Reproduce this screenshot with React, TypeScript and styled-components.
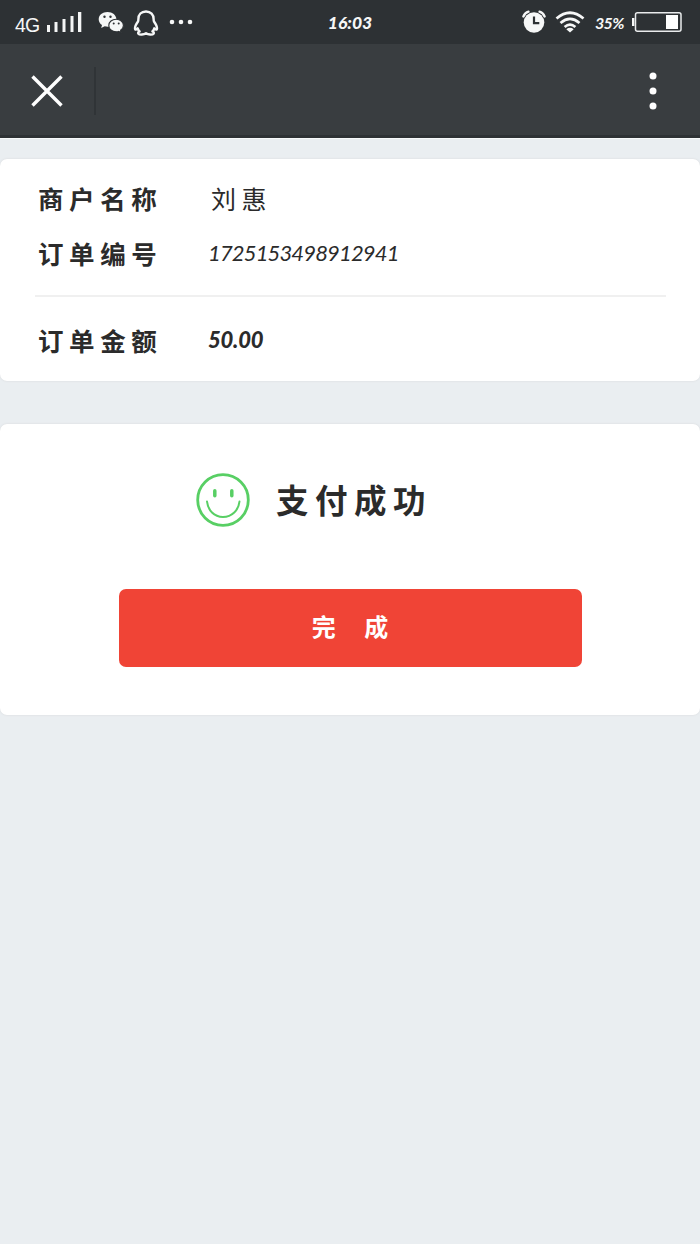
import React from "react";
import styled, { createGlobalStyle } from "styled-components";

const GlobalStyle = createGlobalStyle`
  * { box-sizing: border-box; }
  body {
    margin: 0;
    background: #eaeef1;
    color: #2b2b2b;
    font-family: Lato, "Noto Sans CJK SC", sans-serif;
  }
`;

const Screen = styled.div`
  width: 700px;
  min-height: 1244px;
  background: #eaeef1;
`;

const StatusBar = styled.header`
  display: grid;
  grid-template-columns: 1fr auto 1fr;
  align-items: center;
  height: 44px;
  padding: 0 18px 0 15px;
  background: #2d3134;
  color: #f6f7f7;
`;

const StatusGroup = styled.div<{ $end?: boolean }>`
  display: flex;
  align-items: center;
  justify-content: ${(p) => (p.$end ? "flex-end" : "flex-start")};
  height: 44px;
`;

const Network = styled.span`
  width: 31px;
  padding-top: 5px;
  font: 19.5px/22px "Liberation Sans", sans-serif;
  letter-spacing: -0.8px;
`;

const Clock = styled.time`
  padding: 2px 0 0 3px;
  font-size: 17.5px;
  font-weight: 900;
  font-style: italic;
  line-height: 22px;
`;

const BatteryText = styled.span`
  width: 37px;
  margin-left: 10px;
  font-size: 16px;
  font-weight: 700;
  font-style: italic;
  letter-spacing: -0.7px;
  white-space: nowrap;
`;

const NavBar = styled.nav`
  display: flex;
  align-items: center;
  height: 95px;
  padding: 0 38px 0 31px;
  background: #393d40;
  border-bottom: 1px solid #f8fafb;
  box-shadow: inset 0 -3px 0 #2e3235;
`;

const NavButton = styled.button`
  display: flex;
  padding: 0;
  border: 0;
  background: none;
  color: #fff;
`;

const NavDivider = styled.span`
  width: 2px;
  height: 48px;
  margin: 0 auto 0 31px;
  background: #303437;
`;

const Content = styled.main`
  display: flex;
  flex-direction: column;
  gap: 43px;
  padding-top: 20px;
`;

const Card = styled.section`
  background: #fff;
  border-radius: 7px;
  box-shadow: 0 0 2px #d3d5d7;
`;

const OrderCard = styled(Card)`
  height: 222px;
  padding: 11px 34px 0 35px;
`;

const OrderRow = styled.div`
  display: flex;
  align-items: center;
  height: 55px;
`;

const Label = styled.span`
  width: 173px;
  padding-left: 3px;
  font-family: "Noto Sans CJK SC", sans-serif;
  font-size: 25.5px;
  font-weight: 700;
  letter-spacing: 5.6px;
  line-height: 40px;
`;

const Name = styled.span`
  padding-left: 3px;
  font-family: "Noto Sans CJK SC", sans-serif;
  font-size: 25px;
  font-weight: 400;
  letter-spacing: 5.5px;
  line-height: 40px;
`;

const OrderNumber = styled.span`
  font-size: 22px;
  font-style: italic;
  letter-spacing: -0.85px;
`;

const Amount = styled.span`
  font-size: 22px;
  font-weight: 900;
  font-style: italic;
  letter-spacing: -0.2px;
`;

const Divider = styled.hr`
  height: 2px;
  margin: 15px 0;
  border: 0;
  background: #f0f0f0;
`;

const ResultCard = styled(Card)`
  display: flex;
  flex-direction: column;
  align-items: center;
  height: 291px;
  padding-top: 46px;
`;

const Result = styled.div`
  display: flex;
  align-items: center;
  align-self: flex-start;
  height: 60px;
  margin-left: 195px;
`;

const ResultTitle = styled.h1`
  margin: 0 0 3px 25px;
  font-family: "Noto Sans CJK SC", sans-serif;
  font-size: 32.5px;
  font-weight: 700;
  letter-spacing: 6.5px;
  line-height: 50px;
`;

const DoneButton = styled.button`
  width: 463px;
  height: 78px;
  margin-top: 59px;
  padding: 0 0 4px;
  border: 0;
  border-radius: 7px;
  background: #f04436;
  color: #fff;
  font: 700 24px/36px "Noto Sans CJK SC", sans-serif;
  white-space: pre;
  word-spacing: 23px;
`;

const SignalIcon = () => (
  <svg width="37" height="24" viewBox="0 0 37 24" fill="#f4f5f5">
    <rect x="1" y="15" width="3" height="7" />
    <rect x="8.5" y="12" width="3" height="10" />
    <rect x="16.5" y="9" width="3" height="13" />
    <rect x="24.5" y="6" width="3" height="16" />
    <rect x="32" y="2" width="3.3" height="20" />
  </svg>
);

const ChatIcon = () => (
  <svg width="26" height="23" viewBox="0 0 26 23" style={{ marginLeft: 15 }}>
    <path d="M9.5 1C4.5 1 .7 4.1.7 8.2c0 2.4 1.2 4.4 3.3 5.8l-.8 3.1 3.5-1.8c1 .3 2 .4 3.2.4 4.8 0 8.5-3.2 8.5-7.4S14.5 1 9.5 1Z" fill="#f6f7f7" />
    <path d="M18.2 8.200c-4.200 0-7.400 2.800-7.400 6.300s3.200 6.300 7.400 6.300c.9 0 1.700-.1 2.500-.4l2.600 1.400-.7-2.500c1.700-1.200 2.800-2.900 2.800-4.800 0-3.500-3.100-6.300-7.200-6.300Z" fill="#f6f7f7" stroke="#2d3134" strokeWidth="1.1" />
    <g fill="#2d3134">
      <circle cx="6.5" cy="5.7" r="1.2" />
      <circle cx="12.5" cy="5.7" r="1.2" />
      <circle cx="15.7" cy="12.500" r="1" />
      <circle cx="20.7" cy="12.500" r="1" />
    </g>
  </svg>
);

const PenguinIcon = () => (
  <svg width="26" height="26" viewBox="0 0 26 26" fill="none" stroke="#f6f7f7" strokeWidth="2.4" strokeLinejoin="round" style={{ margin: "2px 0 0 9px" }}>
    <path d="M13 1.500c-4.800 0-7.600 3.300-7.600 7.500 0 1-.1 1.700-.4 2.500C3.200 14 1.900 16.500 2 18.500c.1 1.700 1.400 1.300 2.700-.2.400 1.300 1 2.300 1.900 3.100-1.400.7-1.800 1.700-1.200 2.400 1.200 1.300 5.500.9 7.600-.5 2.100 1.400 6.400 1.800 7.600.5.6-.7.200-1.700-1.200-2.400.9-.8 1.500-1.800 1.900-3.100 1.300 1.500 2.600 1.900 2.700.2.100-2-1.200-4.500-3-7-.3-.8-.4-1.500-.4-2.500 0-4.200-2.800-7.500-7.600-7.500Z" />
  </svg>
);

const MoreIcon = () => (
  <svg width="26" height="6" viewBox="0 0 26 6" fill="#f6f7f7" style={{ marginLeft: 10 }}>
    <circle cx="3" cy="3" r="2.3" />
    <circle cx="12" cy="3" r="2.3" />
    <circle cx="21" cy="3" r="2.3" />
  </svg>
);

const AlarmIcon = () => (
  <svg width="24" height="24" viewBox="0 0 24 24" fill="none">
    <circle cx="12" cy="12.5" r="10.3" fill="#f6f7f7" />
    <path d="M1.400 6.500Q2.800 2.600 6.500 1.700M17.500 1.700Q21.200 2.600 22.600 6.500" stroke="#f6f7f7" strokeWidth="2.300" strokeLinecap="round" />
    <path d="M12 6.500v6.700h5.300" stroke="#2d3134" strokeWidth="2.200" />
  </svg>
);

const WifiIcon = () => (
  <svg width="30" height="22" viewBox="0 0 30 22" fill="none" stroke="#f6f7f7" strokeWidth="2.7" style={{ marginLeft: 9 }}>
    <path d="M1.500 7.500Q15-4 28.500 7.500M5.500 12Q15 3.800 24.500 12M9.600 16Q15 11.400 20.400 16" />
    <path d="m11.300 18.200 3.700 3.200 3.700-3.200Q15 15.500 11.300 18.200Z" fill="#f6f7f7" stroke="none" />
  </svg>
);

const BatteryIcon = () => (
  <svg width="50" height="22" viewBox="0 0 50 22" fill="none">
    <path d="M1.200 7v8" stroke="#f6f7f7" strokeWidth="2.4" />
    <rect x="3.500" y="1.700" width="45.500" height="18.600" rx="2" stroke="#e9ebec" strokeWidth="1.500" />
    <rect x="34" y="4" width="12" height="14" fill="#fff" />
  </svg>
);

const CloseIcon = () => (
  <svg width="32" height="32" viewBox="0 0 32 32" stroke="currentColor" strokeWidth="3.4">
    <path d="m1.500 1.500 29 29m0-29-29 29" />
  </svg>
);

const MenuIcon = () => (
  <svg width="18" height="40" viewBox="0 0 18 40" fill="currentColor">
    <circle cx="9" cy="5" r="3.500" />
    <circle cx="9" cy="20" r="3.500" />
    <circle cx="9" cy="35" r="3.500" />
  </svg>
);

const SmileIcon = () => (
  <svg width="56" height="56" viewBox="0 0 56 56" fill="none" stroke="#58cf64" strokeLinecap="round">
    <circle cx="28" cy="28" r="25.3" strokeWidth="2.8" />
    <path d="M19.800 18.800v5M36.800 18.800v5" strokeWidth="3.5" />
    <path d="M12 29.500c1 8.800 7 15.500 16 15.500s15.500-6.700 16.500-15.500" strokeWidth="2" />
  </svg>
);

export default function App() {
  return (
    <Screen>
      <GlobalStyle />
      <StatusBar>
        <StatusGroup>
          <Network>4G</Network>
          <SignalIcon />
          <ChatIcon />
          <PenguinIcon />
          <MoreIcon />
        </StatusGroup>
        <Clock>16:03</Clock>
        <StatusGroup $end>
          <AlarmIcon />
          <WifiIcon />
          <BatteryText>35%</BatteryText>
          <BatteryIcon />
        </StatusGroup>
      </StatusBar>
      <NavBar>
        <NavButton aria-label="关闭"><CloseIcon /></NavButton>
        <NavDivider />
        <NavButton aria-label="更多"><MenuIcon /></NavButton>
      </NavBar>
      <Content>
        <OrderCard>
          <OrderRow><Label>商户名称</Label><Name>刘惠</Name></OrderRow>
          <OrderRow><Label>订单编号</Label><OrderNumber>1725153498912941</OrderNumber></OrderRow>
          <Divider />
          <OrderRow><Label>订单金额</Label><Amount>50.00</Amount></OrderRow>
        </OrderCard>
        <ResultCard>
          <Result>
            <SmileIcon />
            <ResultTitle>支付成功</ResultTitle>
          </Result>
          <DoneButton>完 成</DoneButton>
        </ResultCard>
      </Content>
    </Screen>
  );
}
